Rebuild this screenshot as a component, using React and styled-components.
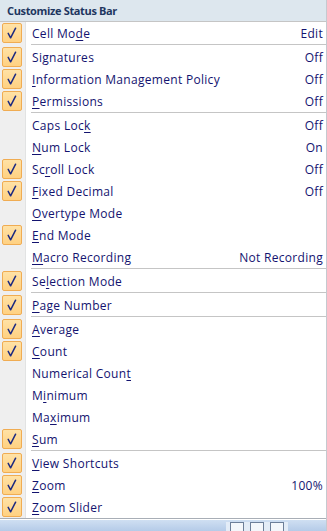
import React from "react";
import styled, { createGlobalStyle } from "styled-components";

const GlobalStyle = createGlobalStyle`
  html, body {
    margin: 0;
    padding: 0;
    background: #ffffff;
  }
  body {
    font-family: "Open Sans", "Noto Sans", Arial, sans-serif;
  }
`;

const Menu = styled.div`
  width: 326px;
  height: 531px;
  display: flex;
  flex-direction: column;
  border-right: 1px solid #c5c9cf;
  background: #ffffff;
  overflow: hidden;
`;

const Header = styled.div`
  height: 21px;
  display: flex;
  align-items: center;
  padding-left: 7px;
  background: #dde7ee;
  border-bottom: 1px solid #c5c5c5;
  font-size: 11px;
  font-weight: bold;
  letter-spacing: -0.35px;
  color: #1e3660;
`;

const Body = styled.div`
  display: flex;
  flex-direction: column;
  background: linear-gradient(
    to right,
    #efefef 0 25px,
    #e2e3e3 25px 26px,
    #ffffff 26px
  );
  border-bottom: 1px solid #a8aeb6;
`;

const Row = styled.div`
  height: 22px;
  display: grid;
  grid-template-columns: 26px 1fr auto;
  align-items: center;
`;

const Gutter = styled.div`
  height: 22px;
  display: flex;
  align-items: center;
  padding-left: 2px;
`;

const CheckBox = styled.div`
  width: 18px;
  height: 18px;
  border: 1px solid #f0ac52;
  border-radius: 2px;
  background: linear-gradient(to bottom, #ffe2a6, #ffd182);
  display: flex;
  align-items: center;
  justify-content: center;
`;

const Label = styled.span`
  padding-left: 6px;
  font-size: 12px;
  letter-spacing: 0.3px;
  color: #13136f;
  white-space: nowrap;

  u {
    text-decoration: underline;
    text-underline-offset: 2px;
  }
`;

const Value = styled.span`
  padding-right: 3px;
  font-size: 12px;
  letter-spacing: 0.3px;
  color: #13136f;
  white-space: nowrap;
`;

const Separator = styled.div`
  height: 2px;
  margin-left: 31px;
  border-top: 1px solid #c5c5c5;
  border-bottom: 1px solid #ffffff;
  box-sizing: border-box;
`;

const StatusStrip = styled.div`
  flex: 1;
  display: flex;
  align-items: flex-end;
  background: linear-gradient(to bottom, #cfdff2, #b5cbe8);
  border-top: 1px solid #ffffff;
`;

const ViewButtons = styled.div`
  margin-left: 226px;
  display: flex;
  gap: 6px;
  height: 9px;
  padding: 0 4px;
  background: #e3ecf7;
`;

const ViewButton = styled.div`
  width: 12px;
  height: 8px;
  border: 1px solid #6d7f99;
  border-bottom: none;
  background: #f4f7fb;
`;

const Check = () => (
  <svg width="14" height="14" viewBox="0 0 14 14">
    <path
      d="M3.2 7.4 L5.6 11.8 L10.6 2.2"
      fill="none"
      stroke="#1d2a80"
      strokeWidth="1.5"
      strokeLinecap="round"
      strokeLinejoin="round"
    />
  </svg>
);

const items = [
  { label: ["Cell Mo", "d", "e"], value: "Edit", checked: true },
  "sep",
  { label: ["Si", "g", "natures"], value: "Off", checked: true },
  { label: ["", "I", "nformation Management Policy"], value: "Off", checked: true },
  { label: ["", "P", "ermissions"], value: "Off", checked: true },
  "sep",
  { label: ["Caps Loc", "k", ""], value: "Off" },
  { label: ["", "N", "um Lock"], value: "On" },
  { label: ["Sc", "r", "oll Lock"], value: "Off", checked: true },
  { label: ["", "F", "ixed Decimal"], value: "Off", checked: true },
  { label: ["", "O", "vertype Mode"] },
  { label: ["", "E", "nd Mode"], checked: true },
  { label: ["", "M", "acro Recording"], value: "Not Recording" },
  "sep",
  { label: ["Se", "l", "ection Mode"], checked: true },
  "sep",
  { label: ["", "P", "age Number"], checked: true },
  "sep",
  { label: ["", "A", "verage"], checked: true },
  { label: ["", "C", "ount"], checked: true },
  { label: ["Numerical Coun", "t", ""] },
  { label: ["M", "i", "nimum"] },
  { label: ["Ma", "x", "imum"] },
  { label: ["", "S", "um"], checked: true },
  "sep",
  { label: ["", "V", "iew Shortcuts"], checked: true },
  { label: ["", "Z", "oom"], value: "100%", checked: true },
  { label: ["", "Z", "oom Slider"], checked: true },
];

const App = () => {
  return (
    <>
      <GlobalStyle />
      <Menu>
        <Header>Customize Status Bar</Header>
        <Body>
          {items.map((item, i) =>
            item === "sep" ? (
              <Separator key={i} />
            ) : (
              <Row key={i}>
                <Gutter>
                  {item.checked && (
                    <CheckBox>
                      <Check />
                    </CheckBox>
                  )}
                </Gutter>
                <Label>
                  {item.label[0]}
                  <u>{item.label[1]}</u>
                  {item.label[2]}
                </Label>
                <Value>{item.value}</Value>
              </Row>
            )
          )}
        </Body>
        <StatusStrip>
          <ViewButtons>
            <ViewButton />
            <ViewButton />
            <ViewButton />
          </ViewButtons>
        </StatusStrip>
      </Menu>
    </>
  );
};

export default App;
